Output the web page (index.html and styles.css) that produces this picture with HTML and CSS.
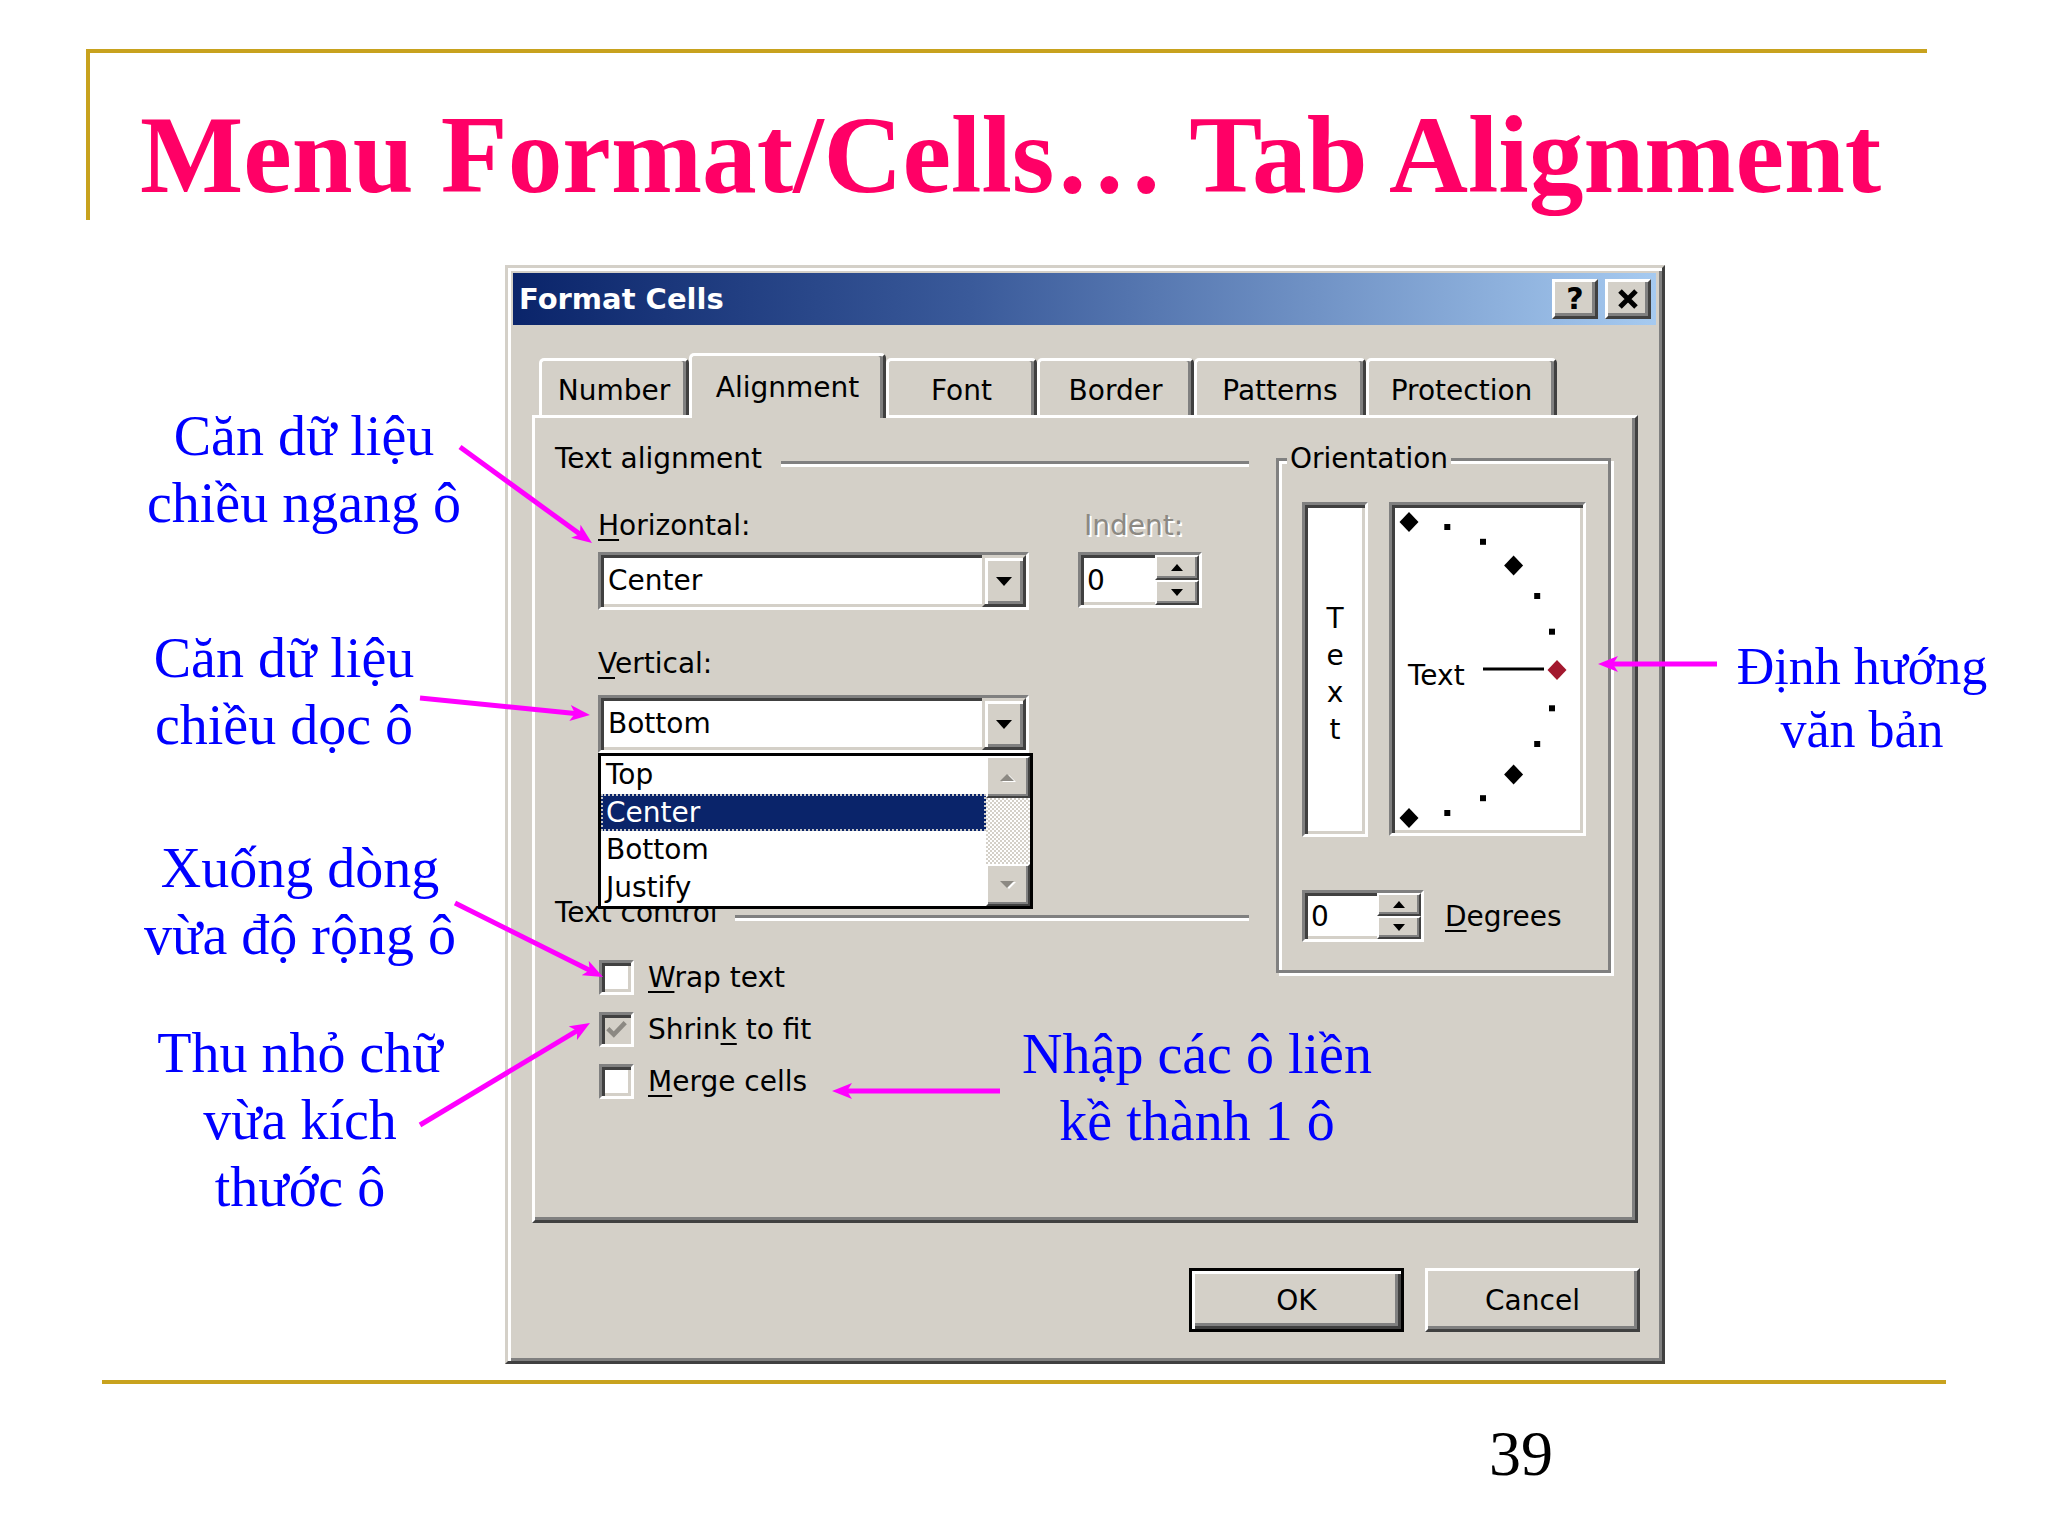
FILE: index.html
```html
<!DOCTYPE html>
<html lang="vi">
<head>
<meta charset="utf-8">
<title>Menu Format/Cells… Tab Alignment</title>
<link rel="stylesheet" href="styles.css">
</head>
<body>
<div class="slide">
  <header class="slide-header">
    <h1 class="slide-title">Menu Format/Cells… Tab Alignment</h1>
  </header>

  <div class="dialog">
    <div class="titlebar">
      <span class="titlebar-text">Format Cells</span>
      <div class="titlebar-buttons">
        <span class="cap-btn">?</span>
        <span class="cap-btn"><svg width="22" height="20" viewBox="0 0 22 20"><path d="M3 2 L19 18 M19 2 L3 18" stroke="#000" stroke-width="5"/></svg></span>
      </div>
    </div>

    <div class="dialog-body">
      <div class="tabs">
        <div class="tab tab-number">Number</div>
        <div class="tab tab-alignment active">Alignment</div>
        <div class="tab tab-font">Font</div>
        <div class="tab tab-border">Border</div>
        <div class="tab tab-patterns">Patterns</div>
        <div class="tab tab-protection">Protection</div>
      </div>

      <div class="panel">
        <div class="col-left">
          <div class="group-head"><span class="group-label">Text alignment</span><i class="etch"></i></div>

          <div class="align-row">
            <div class="field field-wide">
              <div class="label"><u>H</u>orizontal:</div>
              <div class="combo sunken">
                <span class="combo-text">Center</span>
                <span class="drop-btn raised"><svg width="16" height="9" viewBox="0 0 16 9"><path d="M0 0 H16 L8 9 Z" fill="#000"/></svg></span>
              </div>
            </div>
            <div class="field">
              <div class="label disabled indent-label">Indent:</div>
              <div class="spin spin-indent sunken">
                <span class="spin-text">0</span>
                <span class="spin-btns">
                  <span class="spin-btn raised-thin"><svg width="12" height="7" viewBox="0 0 12 7"><path d="M0 7 H12 L6 0 Z" fill="#000"/></svg></span>
                  <span class="spin-btn raised-thin"><svg width="12" height="7" viewBox="0 0 12 7"><path d="M0 0 H12 L6 7 Z" fill="#000"/></svg></span>
                </span>
              </div>
            </div>
          </div>

          <div class="label vlabel"><u>V</u>ertical:</div>
          <div class="combo-wrap">
            <div class="combo sunken">
              <span class="combo-text">Bottom</span>
              <span class="drop-btn raised"><svg width="16" height="9" viewBox="0 0 16 9"><path d="M0 0 H16 L8 9 Z" fill="#000"/></svg></span>
            </div>
            <div class="listbox">
              <div class="list-items">
                <div class="list-item">Top</div>
                <div class="list-item selected">Center</div>
                <div class="list-item">Bottom</div>
                <div class="list-item">Justify</div>
              </div>
              <div class="scrollbar">
                <span class="sb-btn raised-thin"><svg width="16" height="9" viewBox="0 0 16 9"><path d="M2 9 H16 L9 2 Z" fill="#fff"/><path d="M0 8 H14 L7 1 Z" fill="#8c8983"/></svg></span>
                <span class="sb-track"></span>
                <span class="sb-btn raised-thin"><svg width="16" height="9" viewBox="0 0 16 9"><path d="M2 1 H16 L9 8 Z" fill="#fff"/><path d="M0 0 H14 L7 7 Z" fill="#8c8983"/></svg></span>
              </div>
            </div>
          </div>

          <div class="group-head tc-head"><span class="group-label">Text control</span><i class="etch"></i></div>

          <div class="checks">
            <div class="check-row"><span class="check sunken"></span><span class="check-label"><u>W</u>rap text</span></div>
            <div class="check-row"><span class="check check-mixed sunken"><svg width="21" height="21" viewBox="0 0 7 7"><polyline points="0.6,3.2 2.6,5.2 6.4,1.2" fill="none" stroke="#8c8983" stroke-width="1.5"/></svg></span><span class="check-label">Shrin<u>k</u> to fit</span></div>
            <div class="check-row"><span class="check sunken"></span><span class="check-label"><u>M</u>erge cells</span></div>
          </div>
        </div>

        <div class="col-right">
          <div class="orient">
            <span class="orient-legend">Orientation</span>
            <div class="orient-top">
              <div class="vtext sunken">
                <span>T</span><span>e</span><span>x</span><span>t</span>
              </div>
              <div class="dial sunken">
                <svg class="dial-svg" width="191" height="328" viewBox="0 0 191 328">
                  <g fill="#000">
                    <polygon points="17,7 26.5,17 17,27 7.5,17"/>
                    <polygon points="121.6,50.4 131.1,60.4 121.6,70.4 112.1,60.4"/>
                    <polygon points="121.6,259.6 131.1,269.6 121.6,279.6 112.1,269.6"/>
                    <polygon points="17,303 26.5,313 17,323 7.5,313"/>
                    <rect x="52.3" y="19" width="6" height="6"/>
                    <rect x="88" y="33.8" width="6" height="6"/>
                    <rect x="142.2" y="88" width="6" height="6"/>
                    <rect x="157" y="123.7" width="6" height="6"/>
                    <rect x="157" y="200.3" width="6" height="6"/>
                    <rect x="142.2" y="236" width="6" height="6"/>
                    <rect x="88" y="290.2" width="6" height="6"/>
                    <rect x="52.3" y="305" width="6" height="6"/>
                  </g>
                  <polygon points="165,155 174.5,165 165,175 155.5,165" fill="#a3182e"/>
                  <line x1="91" y1="164" x2="152" y2="164" stroke="#000" stroke-width="3"/>
                  <text x="16" y="180" class="dial-text">Text</text>
                </svg>
              </div>
            </div>
            <div class="deg-row">
              <div class="spin spin-deg sunken">
                <span class="spin-text">0</span>
                <span class="spin-btns">
                  <span class="spin-btn raised-thin"><svg width="12" height="7" viewBox="0 0 12 7"><path d="M0 7 H12 L6 0 Z" fill="#000"/></svg></span>
                  <span class="spin-btn raised-thin"><svg width="12" height="7" viewBox="0 0 12 7"><path d="M0 0 H12 L6 7 Z" fill="#000"/></svg></span>
                </span>
              </div>
              <span class="label"><u>D</u>egrees</span>
            </div>
          </div>
        </div>
      </div>

      <div class="buttons">
        <div class="btn btn-default">OK</div>
        <div class="btn">Cancel</div>
      </div>
    </div>
  </div>

  <div class="footer-line"></div>
  <div class="page-num">39</div>

  <div class="note note-h">Căn dữ liệu<br>chiều ngang ô</div>
  <div class="note note-v">Căn dữ liệu<br>chiều dọc ô</div>
  <div class="note note-wrap">Xuống dòng<br>vừa độ rộng ô</div>
  <div class="note note-shrink">Thu nhỏ chữ<br>vừa kích<br>thước ô</div>
  <div class="note note-merge">Nhập các ô liền<br>kề thành 1 ô</div>
  <div class="note note-orient">Định hướng<br>văn bản</div>

  <svg class="arrows" width="2048" height="1536" viewBox="0 0 2048 1536">
    <defs>
      <marker id="ah" viewBox="0 0 20 16" refX="10" refY="8" markerWidth="20" markerHeight="16" orient="auto" markerUnits="userSpaceOnUse">
        <path d="M0 0 L20 8 L0 16 L5 8 Z" fill="#ff00ff"/>
      </marker>
    </defs>
    <g stroke="#ff00ff" stroke-width="5" fill="none" marker-end="url(#ah)">
      <line x1="460" y1="447" x2="583.9" y2="537.1"/>
      <line x1="420" y1="698" x2="580" y2="714"/>
      <line x1="455" y1="903" x2="594.1" y2="972.5"/>
      <line x1="420" y1="1125" x2="581.4" y2="1028.1"/>
      <line x1="1000" y1="1091" x2="842" y2="1091"/>
      <line x1="1717" y1="664" x2="1608" y2="664"/>
    </g>
  </svg>
</div>
</body>
</html>
```

FILE: styles.css
```css
* { box-sizing: border-box; }

body {
  margin: 0;
  background: #fff;
}

.slide {
  position: relative;
  width: 2048px;
  height: 1536px;
  overflow: hidden;
  background: #fff;
  font-family: "DejaVu Sans", "Noto Sans", sans-serif;
  color: #000;
}

/* ---------- slide title ---------- */
.slide-header {
  margin: 49px 0 0 86px;
  width: 1841px;
  height: 171px;
  border-top: 4px solid #c8a21e;
  border-left: 4px solid #c8a21e;
  padding: 41px 0 0 50px;
}

.slide-title {
  margin: 0;
  font-family: "Liberation Serif", "Times New Roman", serif;
  font-weight: bold;
  font-size: 109.4px;
  line-height: 124px;
  color: #ff0066;
  white-space: nowrap;
}

/* ---------- dialog frame ---------- */
.dialog {
  margin: 45px 0 0 505px;
  width: 1160px;
  height: 1099px;
  background: #d4d0c8;
  border: 3px solid;
  border-color: #d4d0c8 #404040 #404040 #d4d0c8;
  box-shadow: inset 3px 3px 0 #fff, inset -3px -3px 0 #808080;
  padding: 5px 6px 0 5px;
  font-size: 28px;
  line-height: 33px;
}

.titlebar {
  height: 52px;
  display: flex;
  align-items: center;
  justify-content: space-between;
  background: linear-gradient(to right, #0a246a 0%, #3a5a9a 40%, #a6caf0 100%);
  padding: 0 5px 0 6px;
}

.titlebar-text {
  color: #fff;
  font-weight: bold;
  font-size: 29px;
  line-height: 34px;
  white-space: nowrap;
}

.titlebar-buttons {
  display: flex;
  gap: 7px;
}

.cap-btn {
  width: 46px;
  height: 40px;
  display: flex;
  align-items: center;
  justify-content: center;
  background: #d4d0c8;
  border: 3px solid;
  border-color: #fff #404040 #404040 #fff;
  box-shadow: inset -3px -3px 0 #808080;
  font-weight: bold;
  font-size: 30px;
  line-height: 30px;
}

.dialog-body {
  padding: 28px 0 0 19px;
}

/* ---------- tabs ---------- */
.tabs {
  position: relative;
  z-index: 1;
  display: flex;
  align-items: flex-end;
  height: 62px;
  padding-left: 7px;
}

.tab {
  height: 57px;
  background: #d4d0c8;
  border: 3px solid;
  border-bottom: 0;
  border-color: #fff #404040 transparent #fff;
  border-radius: 5px 5px 0 0;
  box-shadow: inset -3px 0 0 #808080;
  padding-top: 13px;
  text-align: center;
  white-space: nowrap;
}

.tab.active {
  height: 65px;
  margin-bottom: -3px;
  padding-top: 15px;
}

.tab-number { width: 150px; }
.tab-alignment { width: 197px; }
.tab-font { width: 151px; }
.tab-border { width: 157px; }
.tab-patterns { width: 172px; }
.tab-protection { width: 191px; }

/* ---------- panel ---------- */
.panel {
  width: 1106px;
  height: 808px;
  border: 3px solid;
  border-color: #fff #404040 #404040 #fff;
  box-shadow: inset -3px -3px 0 #808080;
  display: flex;
  align-items: flex-start;
  gap: 27px;
  padding: 24px 0 0 20px;
}

.col-left {
  width: 694px;
}

.group-head {
  display: flex;
  height: 33px;
}

.group-label {
  white-space: nowrap;
}

.etch {
  flex: 1;
  height: 6px;
  margin: 19px 0 0 19px;
  border-top: 3px solid #808080;
  border-bottom: 3px solid #fff;
}

.tc-head {
  margin-top: 143px;
}

.tc-head .etch {
  margin-left: 17px;
}

.label {
  height: 33px;
  white-space: nowrap;
}

u {
  text-decoration-thickness: 2px;
  text-underline-offset: 4px;
}

.disabled {
  color: #8c8983;
  text-shadow: 2px 2px 0 #fff;
}

.indent-label {
  padding-left: 6px;
}

.align-row {
  display: flex;
  gap: 49px;
  margin: 34px 0 0 43px;
}

.field {
  display: flex;
  flex-direction: column;
  gap: 10px;
}

.field-wide {
  width: 431px;
}

.sunken {
  border: 3px solid;
  border-color: #808080 #fff #fff #808080;
  box-shadow: inset 3px 3px 0 #404040, inset -3px -3px 0 #d4d0c8;
}

.raised {
  background: #d4d0c8;
  border: 3px solid;
  border-color: #d4d0c8 #404040 #404040 #d4d0c8;
  box-shadow: inset 3px 3px 0 #fff, inset -3px -3px 0 #808080;
}

.raised-thin {
  background: #d4d0c8;
  border: 2px solid;
  border-color: #fff #404040 #404040 #fff;
  box-shadow: inset -2px -2px 0 #808080;
}

.combo {
  width: 431px;
  height: 58px;
  display: flex;
  align-items: stretch;
  background: #fff;
}

.combo-text {
  flex: 1;
  padding-left: 7px;
  line-height: 52px;
  white-space: nowrap;
}

.drop-btn {
  width: 44px;
  display: flex;
  align-items: center;
  justify-content: center;
}

.spin {
  display: flex;
  background: #fff;
}

.spin-indent {
  width: 124px;
  height: 56px;
}

.spin-deg {
  width: 122px;
  height: 52px;
}

.spin-text {
  flex: 1;
  padding-left: 6px;
  display: flex;
  align-items: center;
}

.spin-btns {
  width: 44px;
  display: flex;
  flex-direction: column;
}

.spin-btn {
  flex: 1;
  display: flex;
  align-items: center;
  justify-content: center;
}

.vlabel {
  margin: 37px 0 0 43px;
}

.combo-wrap {
  position: relative;
  width: 431px;
  margin: 15px 0 0 43px;
}

/* dropped list lies over the "Text control" heading */
.listbox {
  position: absolute;
  z-index: 2;
  top: 58px;
  left: 0;
  width: 435px;
  height: 156px;
  border: 3px solid #000;
  background: #fff;
  display: flex;
}

.list-items {
  flex: 1;
}

.list-item {
  height: 37.5px;
  line-height: 37.5px;
  padding-left: 5px;
  white-space: nowrap;
}

.list-item.selected {
  background: #0a246a;
  color: #fff;
  outline: 2px dotted #c8c8c8;
  outline-offset: -2px;
}

.scrollbar {
  width: 44px;
  display: flex;
  flex-direction: column;
}

.sb-btn {
  height: 42px;
  display: flex;
  align-items: center;
  justify-content: center;
}

.sb-track {
  flex: 1;
  background: repeating-conic-gradient(#fff 0 25%, #d4d0c8 0 50%) 0 0 / 4px 4px;
}

.checks {
  margin: 22px 0 0 44px;
}

.check-row {
  height: 52px;
  display: flex;
  align-items: center;
  gap: 14px;
}

.check {
  width: 35px;
  height: 35px;
  background: #fff;
  display: flex;
  align-items: center;
  justify-content: center;
}

.check-mixed {
  background: #d4d0c8;
}

.check-label {
  white-space: nowrap;
}

/* ---------- orientation ---------- */
.orient {
  position: relative;
  margin-top: 16px;
  width: 335px;
  height: 515px;
  border: 3px solid #808080;
  box-shadow: inset 3px 3px 0 #fff, 3px 3px 0 #fff;
  padding: 41px 0 0 23px;
}

.orient-legend {
  position: absolute;
  left: 8px;
  top: -19px;
  padding: 0 3px;
  background: #d4d0c8;
  white-space: nowrap;
}

.orient-top {
  display: flex;
  gap: 21px;
}

.vtext {
  width: 66px;
  height: 335px;
  background: #fff;
  display: flex;
  flex-direction: column;
  align-items: center;
  justify-content: center;
  padding-top: 8px;
  line-height: 37px;
}

.dial {
  width: 197px;
  height: 334px;
  background: #fff;
}

.dial-svg {
  display: block;
}

.dial-text {
  font-family: "DejaVu Sans", sans-serif;
  font-size: 28px;
  fill: #000;
}

.deg-row {
  display: flex;
  align-items: center;
  gap: 21px;
  margin-top: 53px;
}

.deg-row .label {
  line-height: 33px;
}

/* ---------- buttons ---------- */
.buttons {
  width: 1108px;
  margin-top: 45px;
  display: flex;
  justify-content: flex-end;
  gap: 21px;
}

.btn {
  width: 215px;
  height: 64px;
  display: flex;
  align-items: center;
  justify-content: center;
  background: #d4d0c8;
  border: 3px solid;
  border-color: #fff #404040 #404040 #fff;
  box-shadow: inset -3px -3px 0 #808080;
}

.btn-default {
  border-color: #000;
  box-shadow: inset 3px 3px 0 #fff, inset -3px -3px 0 #404040, inset -6px -6px 0 #808080;
}

/* ---------- footer ---------- */
.footer-line {
  margin: 16px 0 0 102px;
  width: 1844px;
  height: 4px;
  background: #c8a21e;
}

.page-num {
  margin: 33px 0 0 1489px;
  font-family: "Liberation Serif", "Times New Roman", serif;
  font-size: 64px;
  line-height: 74px;
}

/* ---------- annotations on the slide canvas ---------- */
.note {
  position: absolute;
  width: 400px;
  text-align: center;
  font-family: "Liberation Serif", "Times New Roman", serif;
  font-size: 56px;
  line-height: 67px;
  color: #0000ff;
  white-space: nowrap;
}

.note-h { left: 104px; top: 403px; }
.note-v { left: 84px; top: 625px; }
.note-wrap { left: 100px; top: 835px; }
.note-shrink { left: 100px; top: 1020px; }
.note-merge { left: 997px; top: 1021px; }
.note-orient {
  left: 1677px;
  top: 635px;
  width: 370px;
  font-size: 52px;
  line-height: 63px;
}

.arrows {
  position: absolute;
  left: 0;
  top: 0;
  pointer-events: none;
}
```
